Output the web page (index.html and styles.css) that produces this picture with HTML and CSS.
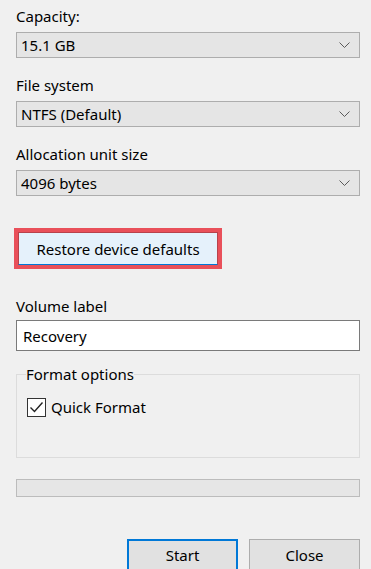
FILE: index.html
```html
<!DOCTYPE html>
<html lang="en">
<head>
    <meta charset="UTF-8">
    <meta name="viewport" content="width=device-width, initial-scale=1.0">
    <title>Format</title>
    <link rel="stylesheet" href="styles.css">
</head>
<body>
    <div class="dialog">
        <div class="field field-first">
            <label class="field-label">Capacity:</label>
            <div class="combo">
                <span>15.1 GB</span>
                <svg class="chevron" width="11" height="6" viewBox="0 0 11 6"><polyline points="0.5,0.5 5.5,5.5 10.5,0.5" fill="none" stroke="#5a5a5a" stroke-width="1"/></svg>
            </div>
        </div>
        <div class="field">
            <label class="field-label">File system</label>
            <div class="combo">
                <span>NTFS (Default)</span>
                <svg class="chevron" width="11" height="6" viewBox="0 0 11 6"><polyline points="0.5,0.5 5.5,5.5 10.5,0.5" fill="none" stroke="#5a5a5a" stroke-width="1"/></svg>
            </div>
        </div>
        <div class="field">
            <label class="field-label">Allocation unit size</label>
            <div class="combo">
                <span>4096 bytes</span>
                <svg class="chevron" width="11" height="6" viewBox="0 0 11 6"><polyline points="0.5,0.5 5.5,5.5 10.5,0.5" fill="none" stroke="#5a5a5a" stroke-width="1"/></svg>
            </div>
        </div>

        <div class="restore-row">
            <button class="restore-button">Restore device defaults</button>
        </div>

        <div class="volume">
            <label class="field-label" for="volume-input">Volume label</label>
            <div class="textbox" id="volume-input">Recovery</div>
        </div>

        <fieldset class="options">
            <legend>Format options</legend>
            <div class="check-row">
                <span class="checkbox">
                    <svg width="17" height="17" viewBox="0 0 17 17"><polyline points="2.5,8.5 6.5,12.5 14.5,3.5" fill="none" stroke="#222" stroke-width="1.4"/></svg>
                </span>
                <span>Quick Format</span>
            </div>
        </fieldset>

        <div class="progress"></div>

        <div class="actions">
            <button class="btn btn-default">Start</button>
            <button class="btn">Close</button>
        </div>
    </div>
</body>
</html>
```

FILE: styles.css
```css
body {
    margin: 0;
    background-color: #f0f0f0;
    font-family: "Noto Sans", sans-serif;
    font-size: 15px;
    color: #000;
    overflow: hidden;
}

.dialog {
    padding: 0 11px 0 16px;
    display: flex;
    flex-direction: column;
}

.field {
    margin-top: 17px;
}

.field-first {
    margin-top: 6px;
}

.field-label {
    display: block;
    line-height: 20px;
}

.combo {
    margin-top: 6px;
    height: 26px;
    box-sizing: border-box;
    border: 1px solid #adadad;
    background-color: #e5e5e5;
    display: flex;
    align-items: center;
    justify-content: space-between;
    padding: 0 9px 0 4px;
}

.chevron {
    display: block;
}

.restore-row {
    margin-top: 36px;
}

.restore-button {
    font: inherit;
    color: #000;
    width: 200px;
    height: 33px;
    margin-left: 2px;
    background-color: #e5f1fb;
    border: 1px solid #b8424c;
    border-bottom-color: #0078d7;
    outline: 4px solid #e9505a;
    padding: 0;
}

.volume {
    margin-top: 31px;
}

.textbox {
    margin-top: 4px;
    height: 31px;
    box-sizing: border-box;
    border: 1px solid #7a7a7a;
    background-color: #fff;
    padding: 0 6px;
    display: flex;
    align-items: center;
}

.options {
    margin: 13px 0 0 0;
    border: 1px solid #dcdcdc;
    padding: 13px 10px 0 10px;
    height: 94px;
    box-sizing: border-box;
}

.options legend {
    padding: 0;
    margin-left: -1px;
    line-height: 20px;
}

.check-row {
    display: flex;
    align-items: center;
    gap: 5px;
    line-height: 20px;
}

.checkbox {
    width: 19px;
    height: 19px;
    box-sizing: border-box;
    border: 1px solid #333;
    background-color: #fff;
    display: flex;
    align-items: center;
    justify-content: center;
}

.progress {
    margin-top: 21px;
    height: 18px;
    box-sizing: border-box;
    border: 1px solid #bcbcbc;
    background-color: #e6e6e6;
}

.actions {
    margin-top: 42px;
    display: flex;
    justify-content: flex-end;
    gap: 11px;
}

.btn {
    font: inherit;
    color: #000;
    width: 111px;
    height: 34px;
    background-color: #e1e1e1;
    border: 1px solid #adadad;
    padding: 0 0 3px 0;
}

.btn-default {
    border: 2px solid #0078d7;
}
```
